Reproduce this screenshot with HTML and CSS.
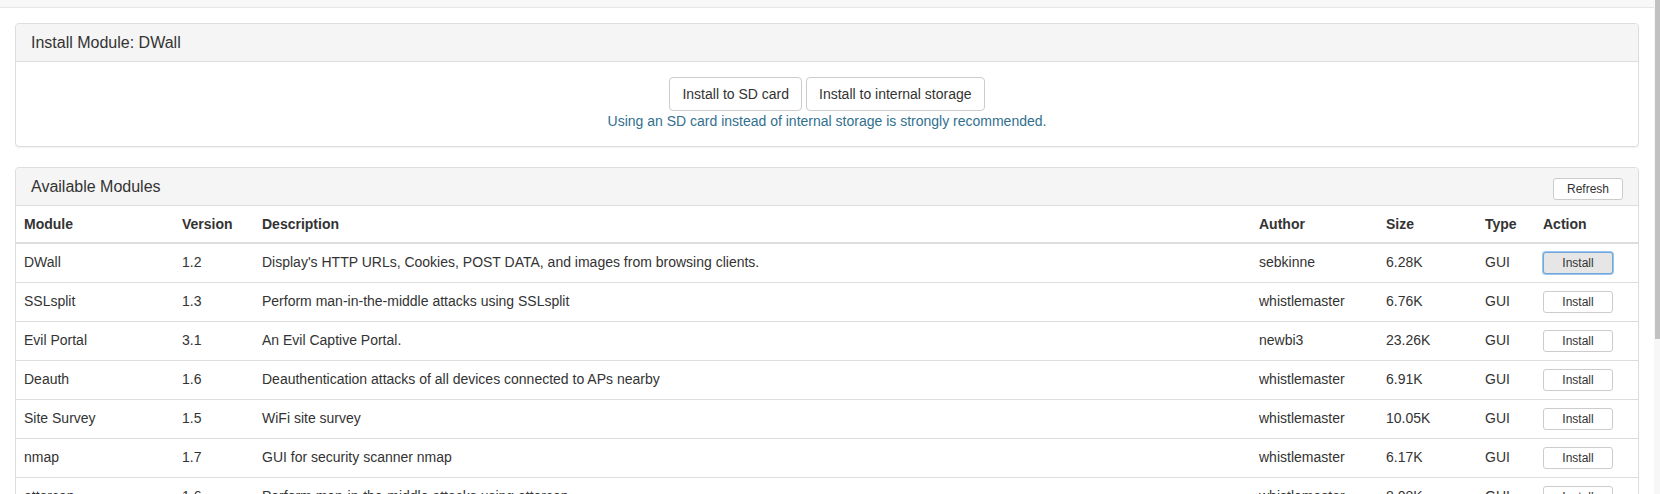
FILE: index.html
```html
<!DOCTYPE html>
<html lang="en">
<head>
<meta charset="utf-8">
<title>Modules</title>
<link rel="stylesheet" href="styles.css">
</head>
<body>
<div class="page">
  <div class="navbar"></div>
  <div class="container">
    <div class="panel">
      <div class="panel-heading">
        <h3 class="panel-title">Install Module: DWall</h3>
      </div>
      <div class="panel-body center">
        <div class="btn-row">
          <button class="btn">Install to SD card</button>
          <button class="btn">Install to internal storage</button>
        </div>
        <div class="text-info">Using an SD card instead of internal storage is strongly recommended.</div>
      </div>
    </div>

    <div class="panel">
      <div class="panel-heading heading-bar">
        <h3 class="panel-title">Available Modules</h3>
        <button class="btn btn-xs">Refresh</button>
      </div>
      <table class="table">
        <colgroup>
          <col class="c-module"><col class="c-version"><col class="c-desc"><col class="c-author"><col class="c-size"><col class="c-type"><col class="c-action">
        </colgroup>
        <thead>
          <tr><th>Module</th><th>Version</th><th>Description</th><th>Author</th><th>Size</th><th>Type</th><th>Action</th></tr>
        </thead>
        <tbody>
          <tr><td>DWall</td><td>1.2</td><td>Display's HTTP URLs, Cookies, POST DATA, and images from browsing clients.</td><td>sebkinne</td><td>6.28K</td><td>GUI</td><td><button class="btn btn-xs btn-install is-focused">Install</button></td></tr>
          <tr><td>SSLsplit</td><td>1.3</td><td>Perform man-in-the-middle attacks using SSLsplit</td><td>whistlemaster</td><td>6.76K</td><td>GUI</td><td><button class="btn btn-xs btn-install">Install</button></td></tr>
          <tr><td>Evil Portal</td><td>3.1</td><td>An Evil Captive Portal.</td><td>newbi3</td><td>23.26K</td><td>GUI</td><td><button class="btn btn-xs btn-install">Install</button></td></tr>
          <tr><td>Deauth</td><td>1.6</td><td>Deauthentication attacks of all devices connected to APs nearby</td><td>whistlemaster</td><td>6.91K</td><td>GUI</td><td><button class="btn btn-xs btn-install">Install</button></td></tr>
          <tr><td>Site Survey</td><td>1.5</td><td>WiFi site survey</td><td>whistlemaster</td><td>10.05K</td><td>GUI</td><td><button class="btn btn-xs btn-install">Install</button></td></tr>
          <tr><td>nmap</td><td>1.7</td><td>GUI for security scanner nmap</td><td>whistlemaster</td><td>6.17K</td><td>GUI</td><td><button class="btn btn-xs btn-install">Install</button></td></tr>
          <tr><td>ettercap</td><td>1.6</td><td>Perform man-in-the-middle attacks using ettercap</td><td>whistlemaster</td><td>8.08K</td><td>GUI</td><td><button class="btn btn-xs btn-install">Install</button></td></tr>
        </tbody>
      </table>
    </div>
  </div>
</div>
<div class="scrollbar"><div class="thumb"></div></div>
</body>
</html>
```

FILE: styles.css
```css
html, body {
  margin: 0;
  height: 494px;
  overflow: hidden;
}
body {
  display: flex;
  font-family: "Liberation Sans", Arial, sans-serif;
  font-size: 14px;
  line-height: 1.42857;
  color: #333;
  background: #fff;
}
.page {
  flex: 1;
  min-width: 0;
}
.navbar {
  height: 7px;
  background: #f8f8f8;
  border-bottom: 1px solid #e7e7e7;
}
.container {
  padding: 15px 15px 0 15px;
}
.panel {
  border: 1px solid #ddd;
  border-radius: 4px;
  margin-bottom: 20px;
  background: #fff;
  box-shadow: 0 1px 1px rgba(0,0,0,0.05);
}
.panel-heading {
  background: #f5f5f5;
  border-bottom: 1px solid #ddd;
  padding: 10px 15px;
  border-radius: 3px 3px 0 0;
}
.panel-title {
  margin: 0;
  font-size: 16px;
  font-weight: normal;
  line-height: 17px;
  color: #333;
}
.heading-bar {
  display: flex;
  justify-content: space-between;
  align-items: flex-start;
  height: 17px;
}
.panel-body {
  padding: 15px;
}
.center {
  text-align: center;
}
.btn-row {
  display: flex;
  justify-content: center;
  gap: 4px;
}
.btn {
  font-family: inherit;
  font-size: 14px;
  line-height: 20px;
  padding: 6px 12px;
  border: 1px solid #ccc;
  border-radius: 4px;
  background: #fff;
  color: #333;
  margin: 0;
}
.btn-xs {
  font-size: 12px;
  line-height: 18px;
  padding: 1px 5px;
  border-radius: 3px;
  width: 70px;
}
.is-focused {
  background: #e6e6e6;
  border-color: #6fa8dc;
  box-shadow: 0 0 0 1px #9cc4ea;
}
.text-info {
  color: #31708f;
  line-height: 20px;
}
.table {
  width: 100%;
  border-collapse: collapse;
  table-layout: fixed;
}
.c-module { width: 158px; }
.c-version { width: 80px; }
.c-desc { width: auto; }
.c-author { width: 127px; }
.c-size { width: 99px; }
.c-type { width: 58px; }
.c-action { width: 103px; }
.table th,
.table td {
  padding: 8px;
  text-align: left;
  vertical-align: top;
  line-height: 20px;
}
.table th {
  font-weight: bold;
  border-bottom: 2px solid #ddd;
}
.table td {
  border-top: 1px solid #ddd;
}
.table thead + tbody tr:first-child td {
  border-top: 0;
}
.scrollbar {
  width: 6px;
  flex: none;
  background: #f7f7f7;
  display: flex;
  justify-content: flex-end;
}
.thumb {
  width: 5px;
  height: 339px;
  background: #c1c1c1;
}
```
